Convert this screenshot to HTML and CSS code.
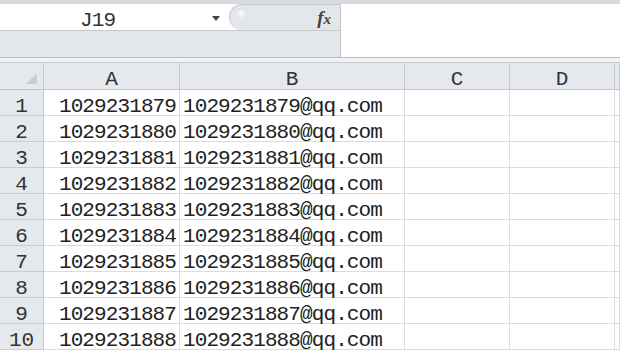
FILE: index.html
```html
<!DOCTYPE html>
<html lang="en">
<head>
  <meta charset="UTF-8" />
  <title>Sheet1</title>
  <link rel="stylesheet" href="styles.css">
</head>
<body>
  <div class="toolbar">
    <div class="toolbar-left">
      <div class="name-row">
        <div class="name-box">
          <span class="cell-ref">J19</span>
          <span class="arrow"></span>
        </div>
        <div class="fx-pill">
          <span class="lens"></span>
          <span class="fx">f<span class="fx-x">x</span></span>
        </div>
      </div>
      <div class="blank-row"></div>
    </div>
    <div class="formula"></div>
  </div>
  <div class="gap"></div>

  <div class="sheet" id="sheet">
    <div class="head corner"><span class="tri"></span></div>
    <div class="head">A</div>
    <div class="head">B</div>
    <div class="head">C</div>
    <div class="head">D</div>
    <div class="head"></div>
  </div>

  <script>
    // fill rows 1..10
    const sheet = document.getElementById("sheet");
    for (let i = 0; i < 10; i++) {
      const num = 1029231879 + i;
      const cells = [
        ["rownum", String(i + 1)],
        ["cell num", String(num)],
        ["cell", num + "@qq.com"],
        ["cell", ""],
        ["cell", ""],
        ["cell", ""]
      ];
      cells.forEach(function(c) {
        const div = document.createElement("div");
        div.className = c[0];
        div.textContent = c[1];
        sheet.appendChild(div);
      });
    }
  </script>
</body>
</html>
```

FILE: styles.css
```css
* {
  margin: 0;
  padding: 0;
  box-sizing: border-box;
}

body {
  width: 620px;
  height: 351px;
  overflow: hidden;
  background: #fff;
  font-family: "Liberation Mono", monospace;
  color: #222;
}

.toolbar {
  display: flex;
  height: 58px;
  border-top: 4px solid #d7dade;
  border-bottom: 1px solid #b9bdc2;
}

.toolbar-left {
  width: 341px;
  display: flex;
  flex-direction: column;
  border-right: 1px solid #c2c6cb;
}

.name-row {
  height: 27px;
  display: flex;
  border-bottom: 1px solid #c5c9ce;
}

.name-box {
  width: 229px;
  background: #fff;
  position: relative;
}

.cell-ref {
  position: absolute;
  left: 80px;
  top: 5px;
  font-size: 21px;
  letter-spacing: -0.9px;
  color: #333;
}

.arrow {
  position: absolute;
  left: 212px;
  top: 12px;
  border-left: 4px solid transparent;
  border-right: 4px solid transparent;
  border-top: 5px solid #444;
}

.fx-pill {
  flex: 1;
  background: #e3e6ea;
  border: 1px solid #c3c7cc;
  border-right: none;
  border-bottom: none;
  border-radius: 14px 0 0 14px;
  position: relative;
}

.lens {
  position: absolute;
  left: 6px;
  top: 5px;
  width: 10px;
  height: 9px;
  border-radius: 50%;
  background: radial-gradient(circle at 50% 40%, #fafbfc 0%, #dfe2e6 90%);
}

.fx {
  position: absolute;
  right: 9px;
  top: 2px;
  font-family: "Liberation Serif", serif;
  font-style: italic;
  font-weight: bold;
  font-size: 19px;
  color: #444;
}

.fx-x {
  font-size: 15px;
}

.blank-row {
  flex: 1;
  background: #e3e6ea;
}

.formula {
  flex: 1;
  background: #fff;
}

.gap {
  height: 5px;
  background: #f1f2f4;
  border-bottom: 1px solid #c8ccd1;
}

.sheet {
  display: grid;
  grid-template-columns: 44px 136px 225px 105px 105px 5px;
  grid-template-rows: 27px repeat(10, 26px);
}

.head {
  background: #e5e8ec;
  border-right: 1px solid #c7cbd0;
  border-bottom: 1px solid #c1c5ca;
  font-size: 21px;
  text-align: center;
  padding-top: 7px;
  line-height: 19px;
  color: #333;
}

.corner {
  position: relative;
}

.tri {
  position: absolute;
  right: 6px;
  bottom: 5px;
  border-left: 11px solid transparent;
  border-bottom: 11px solid #c9ccd0;
}

.rownum {
  background: #e5e8ec;
  border-right: 1px solid #c7cbd0;
  border-bottom: 1px solid #c9cdd2;
  font-size: 21px;
  text-align: center;
  padding-top: 8px;
  line-height: 18px;
  color: #333;
}

.cell {
  border-right: 1px solid #dadcdf;
  border-bottom: 1px solid #dadcdf;
  font-size: 21px;
  letter-spacing: -0.9px;
  padding-top: 8px;
  line-height: 18px;
  padding-left: 3px;
  white-space: nowrap;
}

.num {
  text-align: right;
  padding-right: 3px;
  padding-left: 0;
}
```
